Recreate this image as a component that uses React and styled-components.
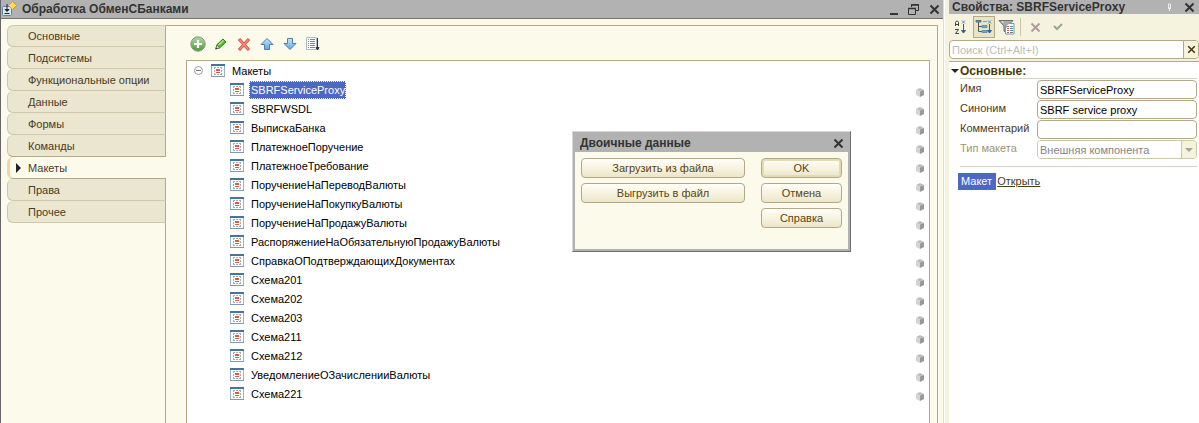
import React from "react";
import styled, { createGlobalStyle } from "styled-components";

const GlobalStyle = createGlobalStyle`
  *, *::before, *::after { box-sizing: border-box; }
  body { margin: 0; background: #fff; }
  body, button, input, select { font: 11px/14px "Liberation Sans", Arial, sans-serif; }
  ul { list-style: none; margin: 0; padding: 0; }
  svg { display: block; flex: none; }
`;

const Desktop = styled.div`
  position: relative;
  display: grid;
  grid-template-columns: minmax(0, 1fr) 255px;
  min-height: 100vh;
  overflow: hidden;
`;

const EditorWindow = styled.main`
  display: flex;
  flex-direction: column;
  min-width: 0;
  border-left: 1px solid #666;
  border-right: 1px solid #dcdcdc;
  background: #fcfaeb;
`;

const TitleBar = styled.header`
  display: flex;
  align-items: center;
  justify-content: space-between;
  height: 19px;
  padding: 0 3px 0 1px;
  background: #b2b2b2;
  border-bottom: 1px solid #77746a;
`;

const Title = styled.h1`
  display: flex;
  align-items: center;
  gap: 5px;
  margin: 0;
  font-size: 12px;
  line-height: 16px;
  font-weight: bold;
  color: #333;
  white-space: nowrap;
`;

const WindowControls = styled.div`
  display: flex;
  gap: 8px;
`;

const IconButton = styled.button`
  display: grid;
  place-items: center;
  width: ${(p) => p.$size || 12}px;
  height: ${(p) => p.$size || 12}px;
  padding: 0;
  border: 0;
  background: transparent;
`;

const EditorBody = styled.div`
  display: flex;
  flex: 1;
  padding: 6px 5px 0 6px;
`;

const Tabs = styled.nav`
  display: flex;
  flex-direction: column;
  width: 159px;
  flex: none;

  &::after {
    content: "";
    flex: 1;
    border-right: 1px solid #b3a987;
  }
`;

const Tab = styled.button`
  display: flex;
  align-items: center;
  gap: 7px;
  height: 22px;
  padding: 0 0 0 ${(p) => (p.$active ? 6 : 20)}px;
  border: 1px solid ${(p) => (p.$active ? "#b3a987" : "#cdc7ac")};
  border-top-width: ${(p) => (p.$first ? 1 : 0)}px;
  border-left: ${(p) => (p.$active ? "3px solid #f6d79b" : "1px solid #cdc7ac")};
  border-right: ${(p) => (p.$active ? "0 solid transparent" : "1px solid #b3a987")};
  border-bottom-color: ${(p) => (p.$active || p.$edge ? "#b3a987" : "#cdc7ac")};
  border-radius: 6px 0 0 6px;
  background: ${(p) => (p.$active ? "#fcfaeb" : "#ebe6cf")};
  color: #4a3b1c;
  text-align: left;
  white-space: nowrap;
`;

const Page = styled.section`
  display: flex;
  flex-direction: column;
  flex: 1;
  min-width: 0;
  padding: 10px 7px 0 20px;
  border-top: 1px solid #b3a987;
  border-right: 1px solid #b3a987;
`;

const Toolbar = styled.div`
  display: flex;
  gap: 7px;
  padding: 0 0 8px 4px;
`;

const Tree = styled.div`
  flex: 1;
  padding: 0 5px 8px 6px;
  border: 1px solid #b3a987;
  border-bottom: 0;
  background: #fff;
`;

const TreeRow = styled.li`
  display: flex;
  align-items: center;
  height: 19px;
  padding-left: ${(p) => (p.$root ? 0 : 37)}px;
`;

const RootIcon = styled.span`
  margin-left: 7px;
`;

const NodeLabel = styled.span`
  padding: 1px 0 1px 1px;
  margin-left: 5px;
  border: 1px dotted ${(p) => (p.$selected ? "#fff" : "transparent")};
  background: ${(p) => (p.$selected ? "#4d68c4" : "transparent")};
  color: ${(p) => (p.$selected ? "#fff" : "#000")};
  white-space: nowrap;
`;

const RowMarker = styled.span`
  margin-left: auto;
  padding-top: 5px;
`;

const Properties = styled.aside`
  display: flex;
  flex-direction: column;
  margin-left: 1px;
  border-left: 4px solid #f5f2de;
  background: #fff;
`;

const PropertiesTitle = styled(TitleBar)`
  height: 14px;
  padding: 0 4px 0 3px;
  border-bottom: 0;
`;

const PropertiesTools = styled.div`
  display: flex;
  align-items: center;
  gap: 1px;
  height: 26px;
  padding: 0 0 0 1px;
  background: #f5f2de;
`;

const ToolButton = styled.button`
  display: grid;
  place-items: center;
  width: 22px;
  height: 22px;
  padding: 0;
  border: 1px solid ${(p) => (p.$pressed ? "#b3a987" : "transparent")};
  background: ${(p) => (p.$pressed ? "#e9e3c6" : "transparent")};
`;

const Separator = styled.span`
  width: 1px;
  height: 18px;
  margin: 0 2px 0 1px;
  background: #cdc7ac;
`;

const SearchBar = styled.div`
  padding-bottom: 2px;
  border-bottom: 1px solid #b3a987;
  background: #f5f2de;
`;

const SearchBox = styled.div`
  display: flex;
  height: 19px;
  border: 1px solid #b3a987;
  border-radius: 4px;
  background: #fff;
  overflow: hidden;
`;

const SearchInput = styled.input`
  flex: 1;
  min-width: 0;
  padding: 0 2px;
  border: 0;
  outline: 0;
  background: transparent;

  &::placeholder { color: #bdbdb8; opacity: 1; }
`;

const ClearButton = styled.button`
  display: grid;
  place-items: center;
  width: 15px;
  padding: 0;
  border: 0;
  border-left: 1px solid #b3a987;
  background: #f5f2de;
`;

const PropertiesForm = styled.form`
  padding: 2px 2px 0 2px;
`;

const SectionHeading = styled.h2`
  display: flex;
  align-items: center;
  gap: 1px;
  margin: 0;
  font-size: 12px;
  line-height: 14px;
  color: #4a3b00;
`;

const Fields = styled.div`
  display: grid;
  grid-template-columns: 77px minmax(0, 1fr);
  row-gap: 1px;
  margin-left: 9px;
  padding: 1px 0 7px;
  border-top: 1px solid #d9d4bd;
  border-bottom: 1px solid #d9d4bd;
`;

const FieldLabel = styled.label`
  line-height: 17px;
  color: ${(p) => (p.$disabled ? "#a3946b" : "#4a3b1c")};
  white-space: nowrap;
`;

const TextInput = styled.input`
  width: 100%;
  height: 19px;
  padding: 1px 2px 0;
  border: 1px solid #b3a987;
  border-radius: 4px;
  background: #fff;
  color: #000;
`;

const SelectBox = styled.div`
  display: flex;
  height: 19px;
  border: 1px solid #cdc7ac;
  border-radius: 4px;
  overflow: hidden;
`;

const Select = styled.select`
  flex: 1;
  min-width: 0;
  padding: 0 2px;
  border: 0;
  appearance: none;
  background: #fff;
  color: #85857f;
  opacity: 1;
`;

const SelectArrow = styled.span`
  display: grid;
  place-items: center;
  width: 15px;
  border-left: 1px solid #cdc7ac;
  background: #f5f2de;
`;

const LinkLine = styled.p`
  display: flex;
  gap: 1px;
  margin: 6px 0 0 7px;
`;

const LinkCaption = styled.span`
  padding: 1px 4px 2px 3px;
  background: #4d68c4;
  color: #fff;
`;

const OpenLink = styled.a`
  padding: 1px 0 2px;
  color: #4a3b1c;
`;

const Dialog = styled.section`
  position: absolute;
  top: 131px;
  left: 572px;
  width: 279px;
  height: 121px;
  border: 1px solid #d6d6d6;
  border-right-color: #6e6e6e;
  border-bottom-color: #6e6e6e;
  padding: 0 2px 2px;
  background: #b2b2b2;
`;

const DialogTitle = styled(TitleBar)`
  height: 20px;
  padding: 2px 4px 0 5px;
  border-bottom: 0;
`;

const DialogBody = styled.div`
  display: flex;
  justify-content: space-between;
  height: 97px;
  padding: 6px 6px 0;
  background: #fcfaeb;
`;

const ButtonColumn = styled.div`
  display: flex;
  flex-direction: column;
  gap: 5px;
  width: ${(p) => p.$width}px;
`;

const PushButton = styled.button`
  height: 20px;
  padding: 0;
  border: 1px solid #b3a987;
  border-radius: 4px;
  background: linear-gradient(#fffefa, #f7f3df 50%, #ebe5c9);
  box-shadow: ${(p) => (p.$primary ? "inset 0 0 0 2px #e4dbb3" : "none")};
  color: #5a4510;
`;

function CloseIcon({ color = "#333", size = 11, width = 2 }) {
  return (
    <svg width={size} height={size} viewBox="0 0 11 11">
      <path d="M1.5 1.5l8 8M9.5 1.5l-8 8" stroke={color} strokeWidth={width} />
    </svg>
  );
}

const MinimizeIcon = () => (
  <svg width="11" height="11" viewBox="0 0 11 11"><path d="M1 9h8v2H1z" fill="#333" /></svg>
);

const RestoreIcon = () => (
  <svg width="12" height="11" viewBox="0 0 12 11" fill="none" stroke="#333">
    <path d="M3.5 3V.5h7v6H8" />
    <path d="M3 1h8M0 4.500h8" strokeWidth="1.500" />
    <path d="M.5 4v6.500h7V4" />
  </svg>
);

const ProcessingIcon = () => (
  <svg width="15" height="16" viewBox="0 0 15 16">
    <rect x=".5" y="5.500" width="9" height="9" rx="1" fill="#d7ebf6" stroke="#5c87a5" />
    <path d="M5 3v7M3 8.500h4L5 10.500zM2.500 12.500h5" stroke="#222" fill="#222" />
    <path d="M10.500 .5l4 4-4 4-4-4z" fill="#ffdc54" stroke="#d19d1e" />
  </svg>
);

const AddIcon = () => (
  <svg width="16" height="16" viewBox="0 0 16 16">
    <defs>
      <linearGradient id="add" x2="0" y2="1"><stop stopColor="#b3d9a2" /><stop offset="1" stopColor="#4e9a3d" /></linearGradient>
    </defs>
    <circle cx="8" cy="8" r="7.200" fill="url(#add)" stroke="#7d9c77" />
    <path d="M8 4v8M4 8h8" stroke="#fff" strokeWidth="2.200" />
  </svg>
);

const EditIcon = () => (
  <svg width="16" height="16" viewBox="0 0 16 16">
    <path d="M3 12.500l1-4 6-5.500 3 3-6.500 6z" fill="#58b52c" stroke="#2f7d1a" />
    <path d="M5.500 9l5-4.500" stroke="#b5e894" strokeWidth="1.500" />
    <path d="M3 12.500l1-3.500 2.500 3z" fill="#f4e3b4" stroke="#3b6e24" strokeWidth=".6" />
    <path d="M2.300 13.500l.5-2 1.500 1.400z" fill="#222" />
  </svg>
);

const DeleteIcon = () => (
  <svg width="16" height="16" viewBox="0 0 16 16" strokeLinecap="square">
    <path d="M4 4l8 9M12 4L4 13" stroke="#d24b3f" strokeWidth="3" />
    <path d="M4 4l8 9M12 4L4 13" stroke="#f98d7e" strokeWidth="1.400" />
  </svg>
);

const ArrowIcon = ({ down }) => (
  <svg width="16" height="16" viewBox="0 0 16 16">
    <defs>
      <linearGradient id="arrow" x2="0" y2="1"><stop stopColor="#c4e6fa" /><stop offset="1" stopColor="#5ba9e0" /></linearGradient>
    </defs>
    <path
      d={down ? "M5.500 2.500h5v5h3.500l-6 6-6-6h3.500z" : "M5.500 13.500h5v-5H14l-6-6-6 6h3.500z"}
      fill="url(#arrow)"
      stroke="#4a7fae"
      strokeLinejoin="round"
    />
  </svg>
);

const SortListIcon = () => (
  <svg width="16" height="16" viewBox="0 0 16 16">
    <path d="M1.500 1.500h10v12h-10z" fill="#fff" stroke="#a9bac7" />
    <path d="M3 3.500h1M5 3.500h5M3 5.500h1M5 5.500h5M3 7.500h1M5 7.500h5M3 9.500h1M5 9.500h5M3 11.500h1M5 11.500h5" stroke="#6f8ea6" />
    <path d="M12.500 2v11M11 11.500h3l-1.500 2.500z" stroke="#333" fill="#333" />
  </svg>
);

const TemplateIcon = () => (
  <svg width="14" height="13" viewBox="0 0 14 13">
    <rect x=".5" y=".5" width="13" height="12" fill="#fff" stroke="#9db4c5" />
    <path d="M0 0h14v2H0z" fill="#44769a" />
    <path d="M0 12.500h14" stroke="#7d9ab0" />
    <path d="M3 3.500h2M6 3.500h2M9 3.500h2M3 10.500h2M6 10.500h2M9 10.500h2" stroke="#a3abb1" />
    <path d="M3.500 4v1M3.500 6v2M3.500 9v1M10.500 4v1M10.500 6v2M10.500 9v1" stroke="#a3abb1" />
    <path d="M5 5.500h4M5 6.500h4M5 8.500h4" stroke="#e0574a" />
  </svg>
);

const CollapseIcon = () => (
  <svg width="11" height="11" viewBox="0 0 11 11" fill="none" stroke="#9c9c9c">
    <circle cx="5.500" cy="5.500" r="4" /><path d="M3 5.500h5" stroke="#777" />
  </svg>
);

const CubeIcon = () => (
  <svg width="8" height="9" viewBox="0 0 8 9">
    <path d="M0 2l4-2 4 2-4 1.500z" fill="#bcbcbc" />
    <path d="M0 2l4 1.500V9L0 7z" fill="#d3d3d3" />
    <path d="M8 2L4 3.500V9l4-2z" fill="#989898" />
  </svg>
);

const AlphaSortIcon = () => (
  <svg width="16" height="16" viewBox="0 0 16 16" fill="none">
    <path d="M2.500 7V3.500l1-1.500h1l1 1.500V7M2.500 5.500h3M2 10.500h3.500L2.500 14.500H6" stroke="#444" />
    <path d="M9 1.500l3 3M12 1.500l-3 3" stroke="#5b8db0" />
    <path d="M10.500 5v9M8.500 11.500h4L10.500 14z" stroke="#2a6695" fill="#2a6695" />
  </svg>
);

const CategoryIcon = () => (
  <svg width="18" height="16" viewBox="0 0 18 16" fill="none">
    <path d="M3.500 3v9.500H7M3.500 7.500H7" stroke="#555" />
    <path d="M1 1.500h5v1.500H1z" fill="#7d99aa" stroke="#55717f" />
    <path d="M7 6.500h5v2H7zM7 11.500h5v2H7z" fill="#6fa9cb" stroke="#5a93b5" />
    <path d="M8 2.500h4" stroke="#6fa9cb" />
    <path d="M13 1.500l3 3M16 1.500l-3 3" stroke="#5b8db0" />
    <path d="M14.500 5v9M12.500 11.500h4L14.500 14z" stroke="#2a6695" fill="#2a6695" />
  </svg>
);

const FilterIcon = () => (
  <svg width="18" height="16" viewBox="0 0 18 16">
    <path d="M1 1.500h14L9.500 7v8L6 12V7z" fill="#a5abae" stroke="#697073" />
    <path d="M3.500 3h8" stroke="#eef0f1" />
    <path d="M7.500 4.500h8.500v10.500H7.500z" fill="#fff" stroke="#8496a3" />
    <path d="M9 7.500h2M9 9.500h2M9 11.500h2M9 13.500h2" stroke="#d3564a" />
    <path d="M12 7.500h3M12 9.500h3M12 11.500h3M12 13.500h3" stroke="#5c88a8" />
    <path d="M5 2h9L9 6.500v2H7.500V6z" fill="#a5abae" />
  </svg>
);

const CheckIcon = () => (
  <svg width="10" height="10" viewBox="0 0 10 10">
    <path d="M1 4l3 3 5-5" fill="none" stroke="#93a98e" strokeWidth="2" />
  </svg>
);

const PinIcon = () => (
  <svg width="5" height="9" viewBox="0 0 5 9" fill="none" stroke="#eee">
    <path d="M1.500 1h2v4h-2zM1 5.500h3M2.500 5.500V8" />
  </svg>
);

const TriangleRight = () => (
  <svg width="5" height="10" viewBox="0 0 5 10"><path d="M0 0l5 5-5 5z" fill="#222" /></svg>
);

const TriangleDown = ({ color = "#222" }) => (
  <svg width="8" height="4" viewBox="0 0 8 4"><path d="M0 0h8L4 4z" fill={color} /></svg>
);

const tabs = [
  "Основные", "Подсистемы", "Функциональные опции", "Данные", "Формы",
  "Команды", "Макеты", "Права", "Прочее",
];
const activeTab = tabs.indexOf("Макеты");

const templates = [
  "SBRFServiceProxy", "SBRFWSDL", "ВыпискаБанка", "ПлатежноеПоручение",
  "ПлатежноеТребование", "ПоручениеНаПереводВалюты", "ПоручениеНаПокупкуВалюты",
  "ПоручениеНаПродажуВалюты", "РаспоряжениеНаОбязательнуюПродажуВалюты",
  "СправкаОПодтверждающихДокументах", "Схема201", "Схема202", "Схема203",
  "Схема211", "Схема212", "УведомлениеОЗачисленииВалюты", "Схема221",
];

const tools = [
  ["Добавить", <AddIcon />],
  ["Изменить", <EditIcon />],
  ["Удалить", <DeleteIcon />],
  ["Вверх", <ArrowIcon />],
  ["Вниз", <ArrowIcon down />],
  ["Сортировать", <SortListIcon />],
];

export default function App() {
  return (
    <Desktop>
      <GlobalStyle />
      <EditorWindow>
        <TitleBar>
          <Title><ProcessingIcon />Обработка ОбменСБанками</Title>
          <WindowControls>
            <IconButton aria-label="Свернуть"><MinimizeIcon /></IconButton>
            <IconButton aria-label="Восстановить"><RestoreIcon /></IconButton>
            <IconButton aria-label="Закрыть"><CloseIcon /></IconButton>
          </WindowControls>
        </TitleBar>
        <EditorBody>
          <Tabs>
            {tabs.map((name, i) => (
              <Tab key={name} $first={i === 0} $active={i === activeTab} $edge={i === activeTab - 1}>
                {i === activeTab && <TriangleRight />}
                {name}
              </Tab>
            ))}
          </Tabs>
          <Page>
            <Toolbar>
              {tools.map(([label, icon]) => (
                <IconButton key={label} $size={16} aria-label={label}>{icon}</IconButton>
              ))}
            </Toolbar>
            <Tree>
              <ul>
                <TreeRow $root>
                  <IconButton $size={11} aria-label="Свернуть ветвь"><CollapseIcon /></IconButton>
                  <RootIcon><TemplateIcon /></RootIcon>
                  <NodeLabel>Макеты</NodeLabel>
                </TreeRow>
                {templates.map((name, i) => (
                  <TreeRow key={name}>
                    <TemplateIcon />
                    <NodeLabel $selected={i === 0}>{name}</NodeLabel>
                    <RowMarker><CubeIcon /></RowMarker>
                  </TreeRow>
                ))}
              </ul>
            </Tree>
          </Page>
        </EditorBody>
      </EditorWindow>

      <Properties>
        <PropertiesTitle>
          <Title as="h2">Свойства: SBRFServiceProxy</Title>
          <WindowControls>
            <IconButton aria-label="Закрепить"><PinIcon /></IconButton>
            <IconButton aria-label="Закрыть свойства"><CloseIcon /></IconButton>
          </WindowControls>
        </PropertiesTitle>
        <PropertiesTools>
          <ToolButton aria-label="По алфавиту"><AlphaSortIcon /></ToolButton>
          <ToolButton $pressed aria-label="По категориям"><CategoryIcon /></ToolButton>
          <ToolButton aria-label="Только важные"><FilterIcon /></ToolButton>
          <Separator />
          <ToolButton aria-label="Отменить"><CloseIcon color="#b09ca0" /></ToolButton>
          <ToolButton aria-label="Применить"><CheckIcon /></ToolButton>
        </PropertiesTools>
        <SearchBar>
          <SearchBox>
            <SearchInput aria-label="Поиск" placeholder="Поиск (Ctrl+Alt+I)" />
            <ClearButton aria-label="Очистить"><CloseIcon color="#4a3b00" size={9} /></ClearButton>
          </SearchBox>
        </SearchBar>
        <PropertiesForm>
          <SectionHeading><TriangleDown />Основные:</SectionHeading>
          <Fields>
            <FieldLabel htmlFor="name">Имя</FieldLabel>
            <TextInput id="name" defaultValue="SBRFServiceProxy" />
            <FieldLabel htmlFor="synonym">Синоним</FieldLabel>
            <TextInput id="synonym" defaultValue="SBRF service proxy" />
            <FieldLabel htmlFor="comment">Комментарий</FieldLabel>
            <TextInput id="comment" />
            <FieldLabel htmlFor="kind" $disabled>Тип макета</FieldLabel>
            <SelectBox>
              <Select id="kind" disabled><option>Внешняя компонента</option></Select>
              <SelectArrow><TriangleDown color="#a9a48f" /></SelectArrow>
            </SelectBox>
          </Fields>
          <LinkLine>
            <LinkCaption>Макет</LinkCaption>
            <OpenLink href="#template">Открыть</OpenLink>
          </LinkLine>
        </PropertiesForm>
      </Properties>

      <Dialog role="dialog" aria-label="Двоичные данные">
        <DialogTitle>
          <Title as="h2">Двоичные данные</Title>
          <IconButton aria-label="Закрыть окно"><CloseIcon /></IconButton>
        </DialogTitle>
        <DialogBody>
          <ButtonColumn $width={164}>
            <PushButton>Загрузить из файла</PushButton>
            <PushButton>Выгрузить в файл</PushButton>
          </ButtonColumn>
          <ButtonColumn $width={81}>
            <PushButton $primary>OK</PushButton>
            <PushButton>Отмена</PushButton>
            <PushButton>Справка</PushButton>
          </ButtonColumn>
        </DialogBody>
      </Dialog>
    </Desktop>
  );
}
